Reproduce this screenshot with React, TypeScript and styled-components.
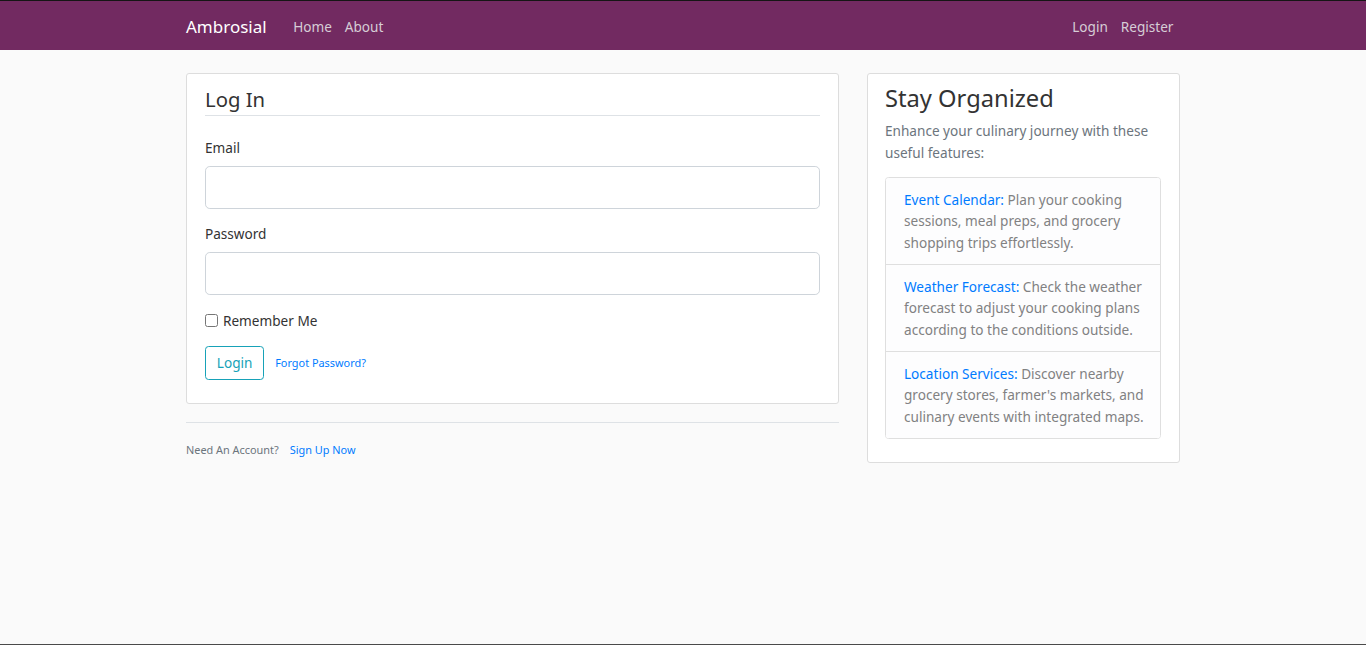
import React from "react";
import styled, { createGlobalStyle } from "styled-components";

const GlobalStyle = createGlobalStyle`
  html, body { margin: 0; padding: 0; }
  body {
    background: #fafafa;
    color: #333333;
    font-family: "Noto Sans", "Open Sans", Arial, sans-serif;
    font-size: 13.6px;
    line-height: 21.6px;
  }
  * { box-sizing: border-box; }
`;

const Page = styled.div`
  min-height: 100vh;
  border-bottom: 1px solid #4a4a4a;
`;

const Header = styled.header`
  background: #722a61;
  border-top: 1px solid #151515;
  height: 50px;
`;

const Container = styled.div`
  width: 994px;
  margin: 0 auto;
`;

const NavBar = styled(Container)`
  display: flex;
  align-items: center;
  height: 49px;
  padding-top: 3px;
`;

const Brand = styled.a`
  color: #ffffff;
  font-size: 17px;
  text-decoration: none;
  margin-right: 20px;
`;

const NavGroup = styled.nav<{ $end?: boolean }>`
  display: flex;
  align-items: center;
  margin-left: ${(p) => (p.$end ? "auto" : "0")};
`;

const NavLink = styled.a`
  color: #d6cdd6;
  font-size: 13.6px;
  padding: 0 6.5px;
  text-decoration: none;
`;

const Main = styled(Container)`
  padding-top: 23px;
  display: grid;
  grid-template-columns: 653px 313px;
  column-gap: 28px;
  align-items: start;
`;

const Card = styled.section`
  background: #ffffff;
  border: 1px solid #dddddd;
  border-radius: 3px;
  padding: 9px 18px;
  margin-bottom: 18px;
`;

const SideCard = styled(Card)`
  padding-left: 17px;
  padding-bottom: 8px;
`;

const Legend = styled.h2`
  font-size: 20.3px;
  font-weight: 400;
  line-height: 32.4px;
  margin: 0 0 20.8px;
  border-bottom: 1px solid #dee2e6;
  color: #333333;
`;

const FormGroup = styled.div`
  margin-bottom: 14.4px;
`;

const Label = styled.label`
  display: block;
  margin-bottom: 7.2px;
  color: #333333;
`;

const Input = styled.input`
  display: block;
  width: 100%;
  height: 43px;
  border: 1px solid #ced4da;
  border-radius: 4.8px;
  background: #ffffff;
  font-size: 17px;
  padding: 0 14px;
  font-family: inherit;
`;

const CheckRow = styled.label`
  display: flex;
  align-items: center;
  gap: 5px;
  color: #333333;
`;

const Check = styled.input`
  width: 13px;
  height: 13px;
  margin: 0;
`;

const ButtonRow = styled.div`
  display: flex;
  align-items: center;
  margin-bottom: 14.6px;
`;

const OutlineButton = styled.button`
  height: 34px;
  padding: 0 10.8px;
  border: 1px solid #17a2b8;
  border-radius: 3.6px;
  background: transparent;
  color: #17a2b8;
  font-family: inherit;
  font-size: 13.6px;
`;

const SmallLink = styled.a`
  font-size: 10.9px;
  color: #007bff;
  text-decoration: none;
  margin-left: 11px;
`;

const Footer = styled.div`
  border-top: 1px solid #dee2e6;
  padding-top: 16px;
  display: flex;
  align-items: center;
  height: 38px;
`;

const Muted = styled.span`
  font-size: 10.9px;
  color: #6c757d;
`;

const SideTitle = styled.h3`
  font-size: 23.7px;
  font-weight: 400;
  line-height: 30.24px;
  margin: 0 0 7.2px;
  color: #333333;
`;

const SideText = styled.p`
  color: #6c757d;
  margin: 0 0 13.6px;
`;

const List = styled.ul`
  list-style: none;
  margin: 0 0 14.4px;
  padding: 0;
  border: 1px solid #dfdfdf;
  border-radius: 3.6px;
  overflow: hidden;
`;

const Item = styled.li`
  background: #fdfdfe;
  color: #818182;
  padding: 10.6px 8px 10.6px 18px;
  & + & { border-top: 1px solid #dfdfdf; }
`;

const ItemLink = styled.a`
  color: #007bff;
  text-decoration: none;
`;

const features = [
  ["Event Calendar:", "Plan your cooking sessions, meal preps, and grocery shopping trips effortlessly."],
  ["Weather Forecast:", "Check the weather forecast to adjust your cooking plans according to the conditions outside."],
  ["Location Services:", "Discover nearby grocery stores, farmer's markets, and culinary events with integrated maps."],
];

export default function App() {
  return (
    <Page>
      <GlobalStyle />
      <Header>
        <NavBar>
          <Brand href="#">Ambrosial</Brand>
          <NavGroup>
            <NavLink href="#">Home</NavLink>
            <NavLink href="#">About</NavLink>
          </NavGroup>
          <NavGroup $end>
            <NavLink href="#">Login</NavLink>
            <NavLink href="#">Register</NavLink>
          </NavGroup>
        </NavBar>
      </Header>
      <Main>
        <div>
          <Card>
            <Legend>Log In</Legend>
            <FormGroup>
              <Label>Email</Label>
              <Input type="email" />
            </FormGroup>
            <FormGroup>
              <Label>Password</Label>
              <Input type="password" />
            </FormGroup>
            <FormGroup>
              <CheckRow>
                <Check type="checkbox" />
                Remember Me
              </CheckRow>
            </FormGroup>
            <ButtonRow>
              <OutlineButton>Login</OutlineButton>
              <SmallLink href="#">Forgot Password?</SmallLink>
            </ButtonRow>
          </Card>
          <Footer>
            <Muted>Need An Account?</Muted>
            <SmallLink href="#">Sign Up Now</SmallLink>
          </Footer>
        </div>
        <SideCard>
          <SideTitle>Stay Organized</SideTitle>
          <SideText>Enhance your culinary journey with these useful features:</SideText>
          <List>
            {features.map(([title, text]) => (
              <Item key={title}>
                <ItemLink href="#">{title}</ItemLink> {text}
              </Item>
            ))}
          </List>
        </SideCard>
      </Main>
    </Page>
  );
}
